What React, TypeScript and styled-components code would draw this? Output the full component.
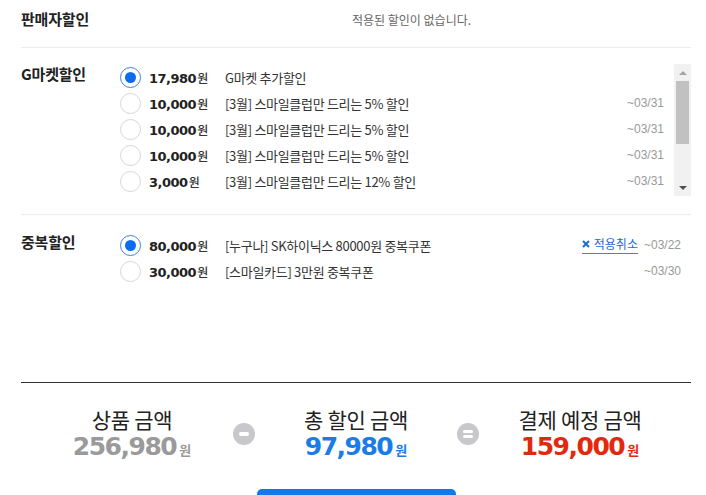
import React from "react";
import styled, { createGlobalStyle } from "styled-components";

type Coupon = {
    amount: string
    desc: string
    date: string
    checked?: boolean
    cancel?: boolean
}

const GlobalStyle = createGlobalStyle`
  html, body {
    margin: 0;
    padding: 0;
    background: #ffffff;
  }
  body {
    font-family: "Noto Sans CJK KR", "Noto Sans", sans-serif;
    color: #222222;
  }
`

const Page = styled.div`
  width: 706px;
  height: 495px;
  overflow: hidden;
  box-sizing: border-box;
  padding: 0 15px 0 21px;
`

const SellerRow = styled.div`
  display: flex;
  align-items: center;
  height: 48px;
  box-sizing: border-box;
  padding-bottom: 9px;
  border-bottom: 1px solid #ececec;
`

const Section = styled.div<{ $top: number; $bottom?: number; $height?: number; $line?: boolean }>`
  display: flex;
  align-items: flex-start;
  box-sizing: border-box;
  padding-top: ${p => p.$top}px;
  padding-bottom: ${p => p.$bottom || 0}px;
  height: ${p => (p.$height ? `${p.$height}px` : "auto")};
  border-bottom: ${p => (p.$line ? "1px solid #ececec" : "none")};
`

const SectionTitle = styled.div`
  width: 99px;
  flex-shrink: 0;
  font-size: 15px;
  font-weight: 700;
  line-height: 20px;
  letter-spacing: -0.2px;
  color: #222222;
`

const EmptyMessage = styled.div`
  flex: 1;
  text-align: center;
  padding-left: 12px;
  font-size: 12px;
  color: #666666;
`

const ScrollBox = styled.div`
  flex: 1;
  display: flex;
  height: 132px;
`

const ListViewport = styled.div`
  flex: 1;
  overflow: hidden;
`

const CouponList = styled.div`
  flex: 1;
`

const Row = styled.div`
  display: flex;
  align-items: center;
  height: 26px;
  padding-right: 10px;
`

const Radio = styled.span<{ $checked?: boolean }>`
  width: 21px;
  height: 21px;
  box-sizing: border-box;
  border-radius: 50%;
  border: ${p => (p.$checked ? "1.5px solid #3b82e0" : "1px solid #d6d6d6")};
  background: #ffffff;
  display: flex;
  align-items: center;
  justify-content: center;
  margin-right: 8px;
  flex-shrink: 0;

  &::after {
    content: "";
    display: ${p => (p.$checked ? "block" : "none")};
    width: 11px;
    height: 11px;
    border-radius: 50%;
    background: #0b6cf0;
  }
`

const Amount = styled.span`
  width: 76px;
  flex-shrink: 0;
  font-family: "DejaVu Sans", sans-serif;
  font-weight: 700;
  font-size: 13px;
  letter-spacing: -0.5px;
  color: #222222;
  white-space: nowrap;
`

const Won = styled.span`
  font-family: "Noto Sans CJK KR", sans-serif;
  font-size: 12px;
  font-weight: 500;
  letter-spacing: 0;
  color: #333333;
  margin-left: 1px;
`

const Desc = styled.span`
  flex: 1;
  font-size: 13px;
  letter-spacing: -0.3px;
  color: #333333;
  white-space: nowrap;
`

const DateText = styled.span`
  font-family: "Liberation Sans", Arial, sans-serif;
  font-size: 12px;
  color: #999999;
`

const CancelLink = styled.a`
  display: inline-flex;
  align-items: center;
  gap: 4px;
  font-size: 12px;
  line-height: 16px;
  color: #1a6dd0;
  text-decoration: none;
  border-bottom: 1px solid #3f82d8;
  padding-bottom: 1px;
  margin-right: 6px;
  cursor: pointer;
`

const ScrollBar = styled.div`
  width: 17px;
  flex-shrink: 0;
  background: #f1f1f1;
  display: flex;
  flex-direction: column;
  align-items: center;
`

const ScrollArrow = styled.div<{ $down?: boolean }>`
  height: 17px;
  width: 17px;
  display: flex;
  align-items: center;
  justify-content: center;

  &::before {
    content: "";
    border-left: 4px solid transparent;
    border-right: 4px solid transparent;
    border-top: ${p => (p.$down ? "4px solid #505050" : "none")};
    border-bottom: ${p => (p.$down ? "none" : "4px solid #a3a3a3")};
  }
`

const ScrollTrack = styled.div`
  flex: 1;
  width: 100%;
  display: flex;
  justify-content: center;
`

const ScrollThumb = styled.div`
  width: 13px;
  height: 63px;
  background: #c1c1c1;
`

const Summary = styled.div`
  border-top: 1px solid #333333;
  padding-top: 22px;
  display: flex;
  justify-content: center;
  align-items: center;
  gap: 12px;
`

const SummaryItem = styled.div`
  width: 178px;
  text-align: center;
`

const SumTitle = styled.div`
  font-size: 21px;
  line-height: 29px;
  letter-spacing: -0.3px;
  color: #222222;
`

const SumValue = styled.div<{ $color: string }>`
  font-family: "DejaVu Sans", sans-serif;
  font-weight: 700;
  font-size: 25px;
  line-height: 26px;
  letter-spacing: -1.5px;
  color: ${p => p.$color};
`

const SumUnit = styled.span`
  font-family: "Noto Sans CJK KR", sans-serif;
  font-size: 13px;
  font-weight: 700;
  letter-spacing: 0;
  margin-left: 3px;
`

const MathIcon = styled.span<{ $kind: "minus" | "equal" }>`
  width: 22px;
  height: 22px;
  flex-shrink: 0;
  border-radius: 50%;
  background: #c8c8cc;
  display: flex;
  flex-direction: column;
  align-items: center;
  justify-content: center;
  gap: 2px;

  &::before, &::after {
    content: "";
    width: 10px;
    height: ${p => (p.$kind === "minus" ? "4px" : "3px")};
    border-radius: 2px;
    background: #ffffff;
  }
  &::after {
    display: ${p => (p.$kind === "minus" ? "none" : "block")};
  }
`

const PayButton = styled.button`
  display: block;
  margin: 26px auto 0;
  width: 199px;
  height: 52px;
  border: none;
  border-radius: 5px;
  background: #1677e6;
`

const gmarketCoupons: Coupon[] = [
    { amount: "17,980", desc: "G마켓 추가할인", date: "", checked: true },
    { amount: "10,000", desc: "[3월] 스마일클럽만 드리는 5% 할인", date: "~03/31" },
    { amount: "10,000", desc: "[3월] 스마일클럽만 드리는 5% 할인", date: "~03/31" },
    { amount: "10,000", desc: "[3월] 스마일클럽만 드리는 5% 할인", date: "~03/31" },
    { amount: "3,000", desc: "[3월] 스마일클럽만 드리는 12% 할인", date: "~03/31" },
]

const extraCoupons: Coupon[] = [
    { amount: "80,000", desc: "[누구나] SK하이닉스 80000원 중복쿠폰", date: "~03/22", checked: true, cancel: true },
    { amount: "30,000", desc: "[스마일카드] 3만원 중복쿠폰", date: "~03/30" },
]

function CouponRow({ item }: { item: Coupon }) {
    return (
        <Row>
            <Radio $checked={item.checked} />
            <Amount>{item.amount}<Won>원</Won></Amount>
            <Desc>{item.desc}</Desc>
            {item.cancel && (
                <CancelLink>
                    <svg width="8" height="8" viewBox="0 0 8 8">
                        <path d="M1 1L7 7M7 1L1 7" stroke="#1a6dd0" strokeWidth="2" />
                    </svg>
                    적용취소
                </CancelLink>
            )}
            <DateText>{item.date}</DateText>
        </Row>
    )
}

export default function App() {
    return (
        <Page>
            <GlobalStyle />
            <SellerRow>
                <SectionTitle>판매자할인</SectionTitle>
                <EmptyMessage>적용된 할인이 없습니다.</EmptyMessage>
            </SellerRow>

            <Section $top={16} $bottom={18} $line>
                <SectionTitle>G마켓할인</SectionTitle>
                <ScrollBox>
                    <ListViewport>
                        {gmarketCoupons.map((c, i) => <CouponRow key={i} item={c} />)}
                    </ListViewport>
                    <ScrollBar>
                        <ScrollArrow />
                        <ScrollTrack><ScrollThumb /></ScrollTrack>
                        <ScrollArrow $down />
                    </ScrollBar>
                </ScrollBox>
            </Section>

            <Section $top={17} $height={167}>
                <SectionTitle>중복할인</SectionTitle>
                <CouponList>
                    {extraCoupons.map((c, i) => <CouponRow key={i} item={c} />)}
                </CouponList>
            </Section>

            <Summary>
                <SummaryItem>
                    <SumTitle>상품 금액</SumTitle>
                    <SumValue $color="#9a9a9a">256,980<SumUnit>원</SumUnit></SumValue>
                </SummaryItem>
                <MathIcon $kind="minus" />
                <SummaryItem>
                    <SumTitle>총 할인 금액</SumTitle>
                    <SumValue $color="#1a7ce8">97,980<SumUnit>원</SumUnit></SumValue>
                </SummaryItem>
                <MathIcon $kind="equal" />
                <SummaryItem>
                    <SumTitle>결제 예정 금액</SumTitle>
                    <SumValue $color="#e2290d">159,000<SumUnit>원</SumUnit></SumValue>
                </SummaryItem>
            </Summary>

            <PayButton aria-label="결제하기" />
        </Page>
    )
}
